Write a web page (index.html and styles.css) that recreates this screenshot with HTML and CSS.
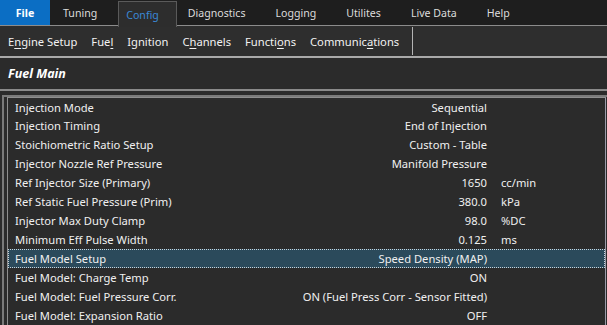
FILE: index.html
```html
<!DOCTYPE html>
<html lang="en">
<head>
    <meta charset="UTF-8">
    <title>Fuel Main</title>
    <link rel="stylesheet" href="styles.css">
</head>
<body>
    <div class="tabs">
        <div class="tab file">File</div>
        <div class="tab">Tuning</div>
        <div class="tab active">Config</div>
        <div class="tab">Diagnostics</div>
        <div class="tab">Logging</div>
        <div class="tab">Utilites</div>
        <div class="tab">Live Data</div>
        <div class="tab">Help</div>
    </div>
    <div class="toolbar">
        <span class="tool">E<u>n</u>gine Setup</span>
        <span class="tool">Fue<u>l</u></span>
        <span class="tool">I<u>g</u>nition</span>
        <span class="tool">C<u>h</u>annels</span>
        <span class="tool">Functi<u>o</u>ns</span>
        <span class="tool">Communic<u>a</u>tions</span>
        <span class="sep"></span>
    </div>
    <div class="heading">Fuel Main</div>
    <div class="panel">
        <div class="grid">
            <div class="row"><span class="name">Injection Mode</span><span class="val">Sequential</span><span class="unit"></span></div>
            <div class="row"><span class="name">Injection Timing</span><span class="val">End of Injection</span><span class="unit"></span></div>
            <div class="row"><span class="name">Stoichiometric Ratio Setup</span><span class="val">Custom - Table</span><span class="unit"></span></div>
            <div class="row"><span class="name">Injector Nozzle Ref Pressure</span><span class="val">Manifold Pressure</span><span class="unit"></span></div>
            <div class="row"><span class="name">Ref Injector Size (Primary)</span><span class="val">1650</span><span class="unit">cc/min</span></div>
            <div class="row"><span class="name">Ref Static Fuel Pressure (Prim)</span><span class="val">380.0</span><span class="unit">kPa</span></div>
            <div class="row"><span class="name">Injector Max Duty Clamp</span><span class="val">98.0</span><span class="unit">%DC</span></div>
            <div class="row"><span class="name">Minimum Eff Pulse Width</span><span class="val">0.125</span><span class="unit">ms</span></div>
            <div class="row selected"><span class="name">Fuel Model Setup</span><span class="val">Speed Density (MAP)</span><span class="unit"></span></div>
            <div class="row"><span class="name">Fuel Model: Charge Temp</span><span class="val">ON</span><span class="unit"></span></div>
            <div class="row"><span class="name">Fuel Model: Fuel Pressure Corr.</span><span class="val">ON (Fuel Press Corr - Sensor Fitted)</span><span class="unit"></span></div>
            <div class="row"><span class="name">Fuel Model: Expansion Ratio</span><span class="val">OFF</span><span class="unit"></span></div>
        </div>
    </div>
</body>
</html>
```

FILE: styles.css
```css
* {
    margin: 0;
    padding: 0;
    box-sizing: border-box;
}

body {
    font-family: "Noto Sans", "Open Sans", sans-serif;
    font-size: 11.2px;
    background: #2b2b2b;
    color: #f0f0f0;
    width: 607px;
    height: 325px;
    overflow: hidden;
}

/* Top tab strip */
.tabs {
    display: flex;
    height: 26px;
    background: #1e1e1e;
    border-bottom: 1px solid #8c8c8c;
}

.tab {
    height: 25px;
    line-height: 27px;
    padding: 0 15px;
    font-size: 10.6px;
    color: #dcdcdc;
    white-space: nowrap;
}

.tab.file {
    background: #0b6ec4;
    color: #fff;
    font-weight: bold;
    width: 50px;
    padding: 0;
    text-align: center;
    margin-right: -2px;
}

.tab.active {
    background: #2d2d2d;
    color: #3a88d6;
    border: 1px solid #5a5a5a;
    border-bottom: none;
    height: 26px;
    line-height: 26px;
    padding: 0 17px 0 7px;
    margin: 1px -4px -1px 6px;
}

/* Sub toolbar */
.toolbar {
    display: flex;
    align-items: center;
    height: 32px;
    background: #2e2e2e;
    border-bottom: 2px solid #a9a9a9;
    padding-left: 8px;
    gap: 14px;
}

.tool {
    color: #f2f2f2;
}

.tool u {
    text-underline-offset: 2px;
}

.sep {
    width: 1px;
    height: 28px;
    background: #b4b4b4;
    margin-left: -1px;
}

/* Page title */
.heading {
    height: 33px;
    padding: 7px 8px 0;
    font-style: italic;
    font-weight: bold;
    color: #fff;
    font-size: 12.5px;
    border-bottom: 2px solid #8a8a8a;
}

/* Settings grid */
.panel {
    margin: 4px 0 0 2px;
    border-top: 2px solid #7a7a7a;
    border-left: 2px solid #7a7a7a;
    padding: 0 0 0 3px;
}

.grid {
    border-top: 1px solid #8e8e8e;
    border-left: 1px solid #8e8e8e;
    border-right: 1px solid #9a9aa8;
    margin-right: 1px;
}

.row {
    display: grid;
    grid-template-columns: 200px 272px 1fr;
    height: 19px;
    line-height: 17px;
    padding-left: 6px;
    border: 1px dotted transparent;
}

.row:first-child {
    height: 18px;
}

.row .val {
    text-align: right;
}

.row .unit {
    padding-left: 14px;
}

.row.selected {
    background: #2b4a5b;
    border: 1px dotted #c8d4dc;
}
```
